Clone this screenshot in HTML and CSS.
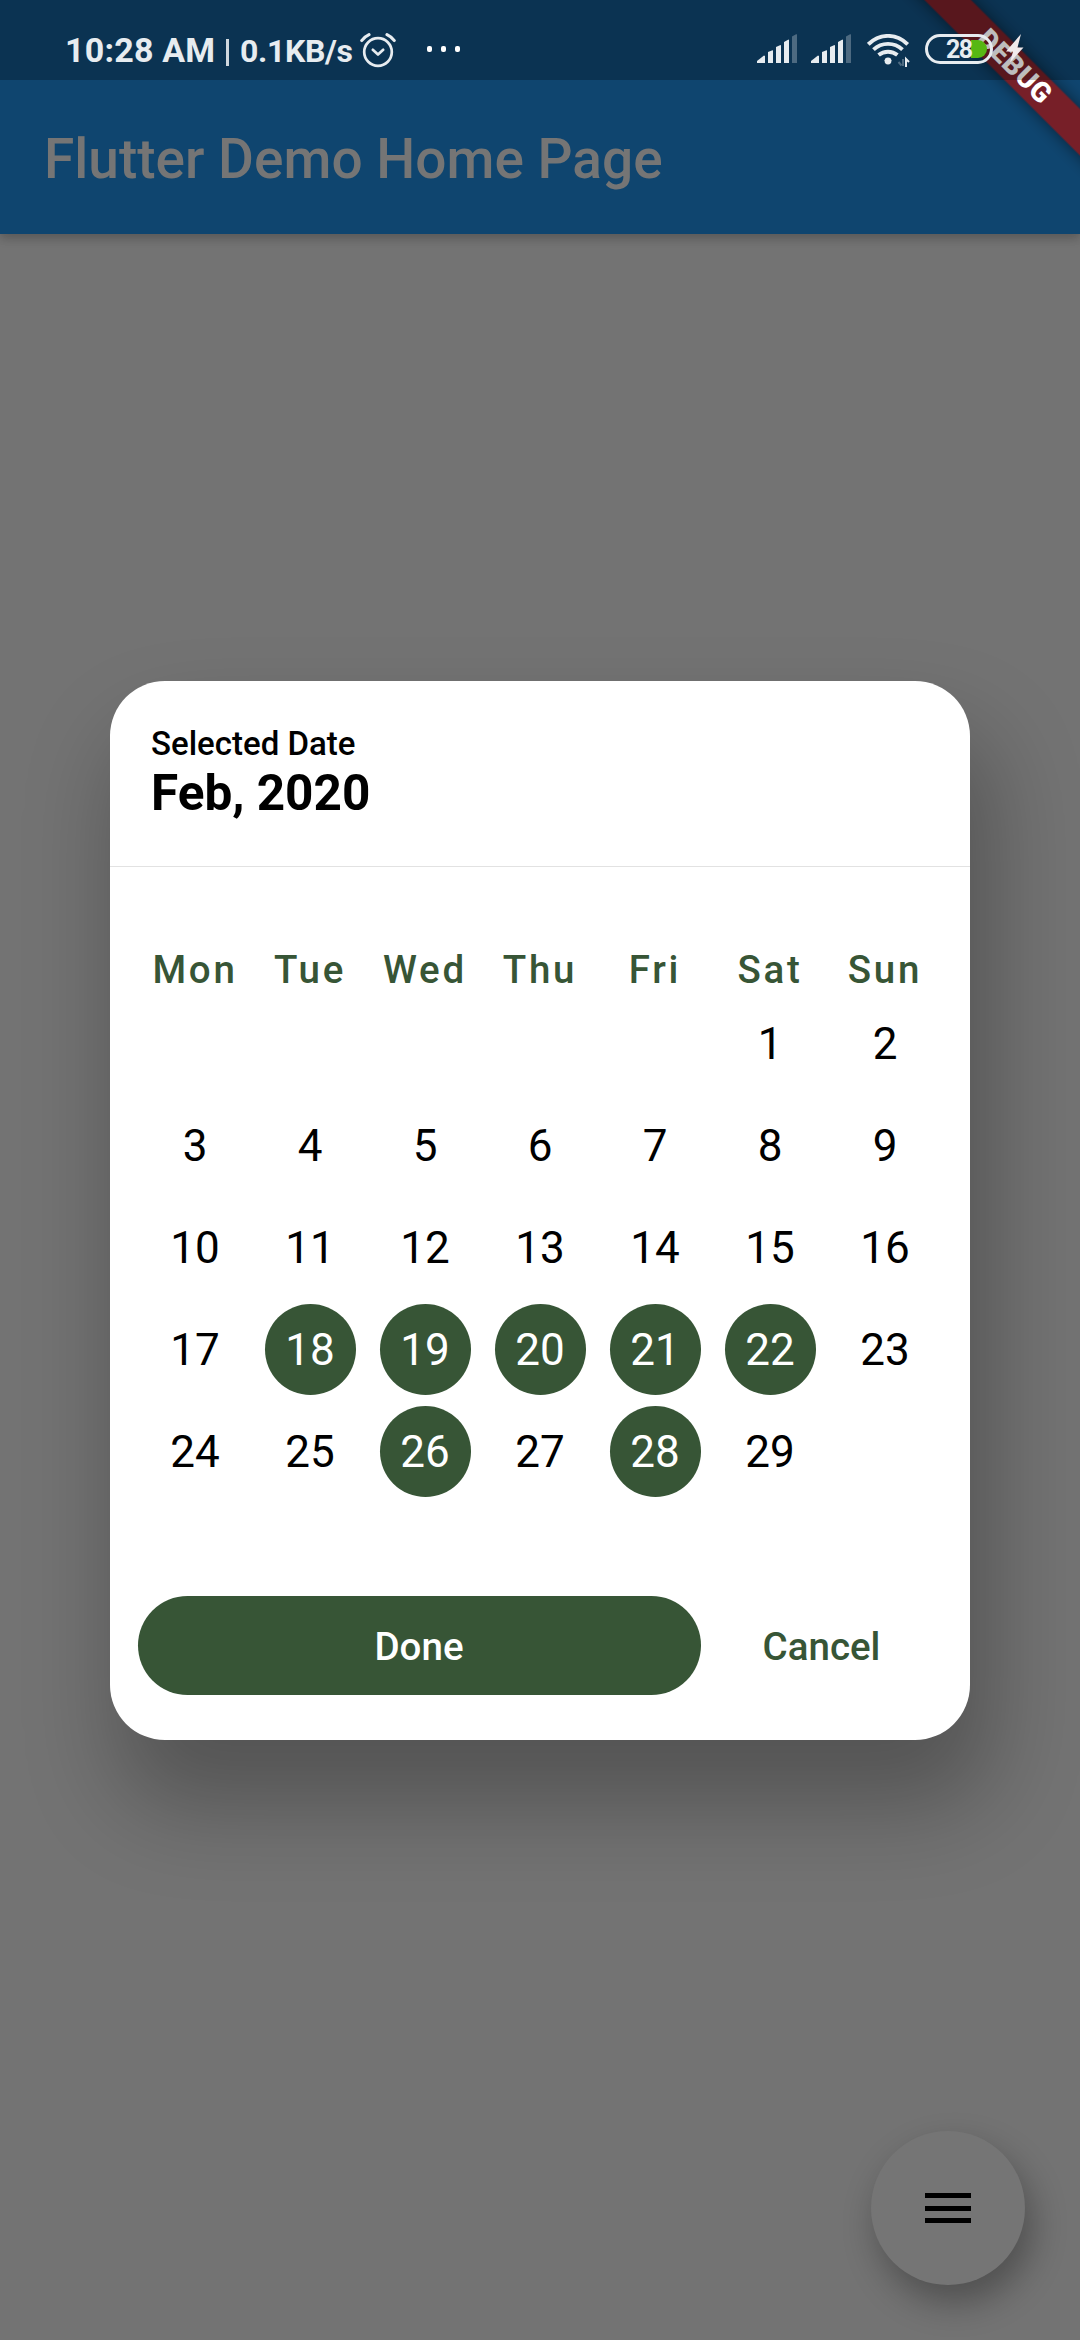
FILE: index.html
```html
<!DOCTYPE html>
<html lang="en">
<head>
<meta charset="utf-8">
<title>Flutter Demo</title>
<link rel="stylesheet" href="styles.css">
</head>
<body>
<div class="screen">
  <header class="top">
    <div class="status">
      <span class="clock">10:28 AM</span>
      <span class="divider-bar"></span>
      <span class="speed">0.1KB/s</span>
      <svg class="alarm" width="36" height="36" viewBox="0 0 36 36" fill="none" stroke="#e7ecf0" stroke-width="2.7" stroke-linecap="round" stroke-linejoin="round">
        <circle cx="18" cy="20" r="13.8"/>
        <path d="M12.800 17.800l5.200 4.700 5.200-4.700"/>
        <path d="M1.800 8.500Q4 5 9 2.600M27 2.600Q32 5 34.200 8.500" stroke-width="3.2"/>
      </svg>
      <span class="dots"><i></i><i></i><i></i></span>
      <div class="indicators">
        <svg class="signal" width="41" height="30" viewBox="0 0 41 30" fill="#e7ecf0">
          <path d="M0 29V27L7 21.5 8 22V29Z"/><path d="M11 29V18L15.500 16.200 16 16.500V29ZM19 29V13L23.500 11 24 11.500V29ZM27 29V8L31.500 5.500 32 6V29Z"/><path d="M35 29V2.500L39.500 0 40 .500V29Z" opacity=".3"/>
        </svg>
        <svg class="signal" width="41" height="30" viewBox="0 0 41 30" fill="#e7ecf0">
          <path d="M0 29V27L7 21.5 8 22V29Z"/><path d="M11 29V18L15.500 16.200 16 16.500V29ZM19 29V13L23.500 11 24 11.500V29ZM27 29V8L31.500 5.500 32 6V29Z"/><path d="M35 29V2.500L39.500 0 40 .500V29Z" opacity=".3"/>
        </svg>
        <svg class="wifi" width="43" height="34" viewBox="0 0 43 34" fill="none" stroke="#e7ecf0" stroke-width="3.9">
          <path d="M1.300 10.300Q10 1.900 21 1.900T40.700 10.300M6.500 15.700Q12.700 9.900 21 9.900T35.500 15.700M11.600 21.100Q15.600 17.700 21 17.700T30.400 21.100"/>
          <path d="M17.300 26.500Q21 23.700 24.700 26.500L21 30Z" fill="#e7ecf0" stroke="none"/><circle cx="21" cy="27" r="3.400" fill="#e7ecf0" stroke="none"/>
          <path d="M36 32V25M31.500 28l3 3.500" stroke-width="2" opacity=".3"/>
          <path d="M39 33V25L42 28" stroke-width="2"/>
        </svg>
        <svg class="battery" width="68" height="30" viewBox="0 0 68 30">
          <path d="M46 6h7a9 9 0 0 1 0 18h-7z" fill="#57b713"/>
          <rect x="1.500" y="1.500" width="65" height="27" rx="13.500" fill="none" stroke="#e7ecf0" stroke-width="3"/>
          <text x="33.800" y="24" class="battery-text" text-anchor="middle">28</text>
        </svg>
        <svg class="bolt" width="18" height="30" viewBox="0 0 18 30"><path d="M15 0L0 17.500H7L4 28.500 17.500 13.500H11.500Z" fill="#f1eaeb"/></svg>
      </div>
    </div>
    <h1 class="title">Flutter Demo Home Page</h1>
    <svg class="banner" width="180" height="180" viewBox="0 0 180 180">
      <g transform="translate(113.900 66.100) rotate(45)">
        <rect class="ribbon" x="-160" y="-16.500" width="320" height="33"/>
        <text class="banner-text" x="1" y="9" text-anchor="middle">DEBUG</text>
      </g>
    </svg>
  </header>

  <section class="dialog">
    <div class="dialog-head">
      <div class="label">Selected Date</div>
      <div class="month">Feb, 2020</div>
    </div>
    <div class="calendar">
      <div class="weekdays"><span>Mon</span><span>Tue</span><span>Wed</span><span>Thu</span><span>Fri</span><span>Sat</span><span>Sun</span></div>
      <div class="days">
        <span class="first">1</span><span>2</span>
        <span>3</span><span>4</span><span>5</span><span>6</span><span>7</span><span>8</span><span>9</span>
        <span>10</span><span>11</span><span>12</span><span>13</span><span>14</span><span>15</span><span>16</span>
        <span>17</span><span class="on">18</span><span class="on">19</span><span class="on">20</span><span class="on">21</span><span class="on">22</span><span>23</span>
        <span>24</span><span>25</span><span class="on">26</span><span>27</span><span class="on">28</span><span>29</span>
      </div>
    </div>
    <div class="actions">
      <button class="done">Done</button>
      <button class="cancel">Cancel</button>
    </div>
  </section>

  <button class="fab" aria-label="Menu"><i></i><i></i><i></i></button>
</div>
</body>
</html>
```
FILE: styles.css
```css
* { box-sizing: border-box; }
body { margin: 0; font-family: Roboto, "Liberation Sans", sans-serif; }
button { border: 0; padding: 0; margin: 0; font: inherit; background: none; }

.screen {
  position: relative;
  width: 1080px;
  height: 2340px;
  overflow: hidden;
  background: #737373;
  display: flex;
  flex-direction: column;
}

.top {
  position: relative;
  height: 234px;
  background: #0f456f;
  box-shadow: 0 5px 9px rgba(0, 0, 0, .16), 0 1px 12px rgba(0, 0, 0, .1);
}
.status {
  position: relative;
  z-index: 2;
  height: 80px;
  padding: 0 56px 0 65px;
  background: rgba(0, 0, 0, .26);
  display: flex;
  align-items: flex-start;
  color: #e7ecf0;
  font-weight: 700;
}
.clock { width: 149px; margin-top: 30px; font-size: 34px; line-height: 40px; white-space: nowrap; letter-spacing: .2px; }
.divider-bar { width: 3px; height: 27px; margin: 39px 11px 0 12px; background: #cfd8df; }
.speed { width: 113px; margin-top: 31px; font-size: 32px; line-height: 40px; white-space: nowrap; letter-spacing: -.35px; }
.alarm { margin: 32px 0 0 7px; }
.dots { display: flex; gap: 9px; margin: 46px 0 0 31px; }
.dots i { width: 5px; height: 6px; border-radius: 2px; background: #fff; }
.indicators { display: flex; margin: 34px 0 0 auto; }
.signal { margin-right: 13px; }
.wifi { margin: 0 15px 0 2px; }
.battery { margin-right: 13px; }
.battery-text { font: 700 25px Roboto, sans-serif; fill: #e7ecf0; letter-spacing: -1.5px; }

.title {
  margin: 0;
  height: 154px;
  padding: 0 44px;
  line-height: 158px;
  font-size: 55px;
  font-weight: 500;
  color: #757575;
}
.banner { position: absolute; top: 0; right: 0; z-index: 1; }
.ribbon { fill: #771f28; filter: drop-shadow(0 0 8px rgba(0, 0, 0, .5)); }
.banner-text { font: 900 28px Roboto, sans-serif; fill: #fff; letter-spacing: .5px; }

.dialog {
  position: absolute;
  left: 110px;
  top: 680.5px;
  width: 860px;
  height: 1059px;
  border-radius: 55px;
  background: #fff;
  box-shadow: 14px 59px 92px 7px rgba(0, 0, 0, .27);
  display: flex;
  flex-direction: column;
}
.dialog-head { height: 186px; padding: 43px 41px 0; border-bottom: 1px solid #e2e2e2; color: #000; }
.label { font-size: 33px; line-height: 39px; font-weight: 500; }
.month { margin-top: 1px; font-size: 49.5px; line-height: 58px; font-weight: 700; }
.calendar { height: 729px; padding: 80px 27.5px 0; }
.weekdays, .days { display: grid; grid-template-columns: repeat(7, 115px); text-align: center; }
.weekdays { height: 46.5px; line-height: 46px; font-size: 38.5px; font-weight: 500; letter-spacing: 2.75px; color: #375536; }
.days { grid-auto-rows: 101.9px; place-items: center; font-size: 44px; color: #000; }
.days span { width: 91px; height: 91px; line-height: 93px; border-radius: 50%; }
.days .first { grid-column-start: 6; }
.days .on { background: #375536; color: #fff; }
.actions { display: flex; padding: 0 27.5px; font-size: 38.5px; font-weight: 500; line-height: 101px; }
.done { width: 563px; height: 99px; border-radius: 49.5px; background: #375536; color: #fff; }
.cancel { width: 242px; height: 99px; color: #375536; }

.fab {
  position: absolute;
  right: 55px;
  bottom: 55px;
  width: 154px;
  height: 154px;
  border-radius: 50%;
  background: #757575;
  box-shadow: 7px 17px 34px 1px rgba(0, 0, 0, .3);
  display: flex;
  flex-direction: column;
  align-items: center;
  justify-content: center;
  gap: 7.5px;
}
.fab i { width: 46px; height: 5px; background: #000; }
```
